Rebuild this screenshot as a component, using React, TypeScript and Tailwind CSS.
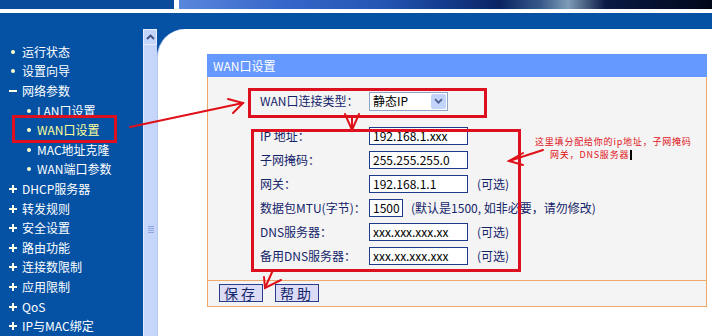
import React from "react";

type Item = { t: string; k: "dot" | "minus" | "plus" | "sub"; active?: boolean };

const items: Item[] = [
  { t: "运行状态", k: "dot" },
  { t: "设置向导", k: "dot" },
  { t: "网络参数", k: "minus" },
  { t: "LAN口设置", k: "sub" },
  { t: "WAN口设置", k: "sub", active: true },
  { t: "MAC地址克隆", k: "sub" },
  { t: "WAN端口参数", k: "sub" },
  { t: "DHCP服务器", k: "plus" },
  { t: "转发规则", k: "plus" },
  { t: "安全设置", k: "plus" },
  { t: "路由功能", k: "plus" },
  { t: "连接数限制", k: "plus" },
  { t: "应用限制", k: "plus" },
  { t: "QoS", k: "plus" },
  { t: "IP与MAC绑定", k: "plus" },
];

function Marker({ k }: { k: Item["k"] }) {
  if (k === "dot" || k === "sub")
    return <span className="w-[4px] h-[4px] rounded-full bg-[#ffffcc]" />;
  if (k === "minus") return <span className="w-[8px] h-[2px] bg-[#ffffee]" />;
  return (
    <span className="relative w-[8px] h-[8px] flex items-center justify-center">
      <span className="absolute w-[8px] h-[2px] bg-[#ffffee]" />
      <span className="absolute w-[2px] h-[8px] bg-[#ffffee]" />
    </span>
  );
}

function Row({ label, children }: { label: string; children: React.ReactNode }) {
  return (
    <div className="h-[24px] flex items-center">
      <div className="w-[109px] text-[12px] text-[#14246a]">{label}</div>
      {children}
    </div>
  );
}

function Input({ v, w = "w-[99px]" }: { v: string; w?: string }) {
  return (
    <div className={`${w} h-[18px] bg-white border border-[#1e3a8a] flex items-center px-[3px] text-[12px] text-black leading-none`}>
      {v}
    </div>
  );
}

function Opt() {
  return <span className="ml-[9px] text-[12px] text-[#14246a]">(可选)</span>;
}

export default function App() {
  return (
    <div
      className="w-[712px] h-[336px] relative overflow-hidden bg-white flex flex-col"
      style={{ fontFamily: '"Noto Sans CJK SC", "Liberation Sans", sans-serif' }}
    >
      {/* top banner */}
      <div className="h-[9px] flex shrink-0">
        <div className="w-[174px] bg-[#0b4b9c]" />
        <div className="w-[5px] bg-white" />
        <div className="flex-1 bg-[linear-gradient(90deg,#5a86dc_0%,#3566c8_20%,#2456b4_38%,#143c8c_50%,#0a2462_60%,#3a5a8a_68%,#7f9cb8_73%,#0a1a44_80%,#000818_100%)]" />
      </div>
      <div className="h-[4px] bg-white shrink-0" />

      {/* main */}
      <div className="flex-1 min-h-0 bg-[#0552a5] pt-[16px] flex">
        {/* sidebar */}
        <div className="w-[143px] pt-[13px] flex flex-col">
          {items.map((it) => (
            <div
              key={it.t}
              className={`h-[20px] flex items-center ${it.k === "sub" ? "pl-[25px]" : "pl-[9px]"}`}
            >
              <span className="w-[8px] flex items-center justify-center">
                <Marker k={it.k} />
              </span>
              <span
                className={`${it.k === "sub" ? "ml-[4px]" : "ml-[5px]"} text-[12px] leading-none whitespace-nowrap ${
                  it.active ? "text-[#ffff99]" : "text-white"
                }`}
              >
                {it.t}
              </span>
            </div>
          ))}
        </div>

        {/* scrollbar */}
        <div className="w-[14px] flex flex-col">
          <div className="h-[16px] bg-[#c4d5fb] border border-[#e6edff] flex items-center justify-center">
            <svg width="9" height="6" viewBox="0 0 9 6">
              <path d="M1 5 L4.5 1.5 L8 5" fill="none" stroke="#3b4f80" strokeWidth="1.8" />
            </svg>
          </div>
          <div className="flex-1 bg-[#c6d6fb] border-l border-[#e2eaff] pt-[181px] flex justify-center">
            <div className="w-[6px] flex flex-col gap-[1px]">
              {[0, 1, 2, 3].map((i) => (
                <div key={i} className="h-[1px] bg-[#8ea6e0]" />
              ))}
            </div>
          </div>
        </div>

        {/* content */}
        <div className="flex-1 bg-white rounded-tl-[28px] border-l border-[#b4c8f2] pl-[49px] pt-[25px]">
          <div className="w-[500px] flex flex-col">
            <div className="h-[23px] bg-[#6699ff] flex items-center pl-[6px] text-[12px] text-white leading-none">
              WAN口设置
            </div>
            <div className="h-[203px] bg-[#f4f4f4] border-x border-[#eea868] pt-[12px] pl-[52px]">
              <Row label="WAN口连接类型：">
                <div className="w-[79px] h-[19px] bg-white border border-[#8da4c8] flex items-center justify-between pl-[3px] pr-[1px]">
                  <span className="text-[12px] leading-none text-black">静态IP</span>
                  <span className="w-[15px] h-[15px] bg-[#c3d4fb] rounded-[2px] flex items-center justify-center">
                    <svg width="9" height="6" viewBox="0 0 9 6">
                      <path d="M1 1.2 L4.5 4.7 L8 1.2" fill="none" stroke="#4d6190" strokeWidth="1.8" />
                    </svg>
                  </span>
                </div>
              </Row>
              <div className="h-[11px]" />
              <Row label="IP 地址：">
                <Input v="192.168.1.xxx" />
              </Row>
              <Row label="子网掩码：">
                <Input v="255.255.255.0" />
              </Row>
              <Row label="网关：">
                <Input v="192.168.1.1" />
                <Opt />
              </Row>
              <Row label="数据包MTU(字节)：">
                <Input v="1500" w="w-[34px]" />
                <span className="ml-[8px] text-[12px] text-[#14246a] whitespace-nowrap">
                  (默认是1500, 如非必要，请勿修改)
                </span>
              </Row>
              <Row label="DNS服务器：">
                <Input v="xxx.xxx.xxx.xx" />
                <Opt />
              </Row>
              <Row label="备用DNS服务器：">
                <Input v="xxx.xx.xxx.xxx" />
                <Opt />
              </Row>
            </div>
            <div className="h-[27px] bg-[#f4f4f4] border border-[#eea868] pl-[11px] pt-[3px] flex gap-[12px]">
              <button className="w-[44px] h-[18px] bg-[#dcdcf6] border border-[#2a3c8c] text-[14px] leading-none text-[#14246a] tracking-[3px]">
                保存
              </button>
              <button className="w-[44px] h-[18px] bg-[#dcdcf6] border border-[#2a3c8c] text-[14px] leading-none text-[#14246a] tracking-[3px]">
                帮助
              </button>
            </div>
          </div>
        </div>
      </div>

      {/* annotation overlay */}
      <svg className="absolute inset-0 pointer-events-none" width="712" height="336" viewBox="0 0 712 336">
        <g fill="none" stroke="#dd1020" strokeWidth="3">
          <rect x="13.5" y="116.5" width="102" height="25" />
          <rect x="249.5" y="89.5" width="236" height="27" />
          <rect x="252.5" y="130.5" width="267" height="140" />
        </g>
        <g fill="none" stroke="#e01018" strokeWidth="2" strokeLinecap="round">
          <path d="M130 127 L243 103" />
          <path d="M228 99 L243 103 L233 113" />
          <path d="M352 117 L352 130" />
          <path d="M345 114 L352 130 L359 114" />
          <path d="M543 150 L509 161" />
          <path d="M523 153 L509 161 L523 165" />
          <path d="M273 270 L265 288" />
          <path d="M264 277 L265 288 L281 280" />
        </g>
      </svg>
      <div className="absolute left-[535px] top-[135px] flex flex-col text-[9px] tracking-[0.8px] leading-none text-[#e01018] pointer-events-none whitespace-nowrap">
        <div className="h-[13px] flex items-center">这里填分配给你的ip地址，子网掩码</div>
        <div className="h-[13px] pl-[15px] flex items-center">
          网关，DNS服务器<span className="ml-[1px] w-[2px] h-[10px] bg-black" />
        </div>
      </div>
    </div>
  );
}
